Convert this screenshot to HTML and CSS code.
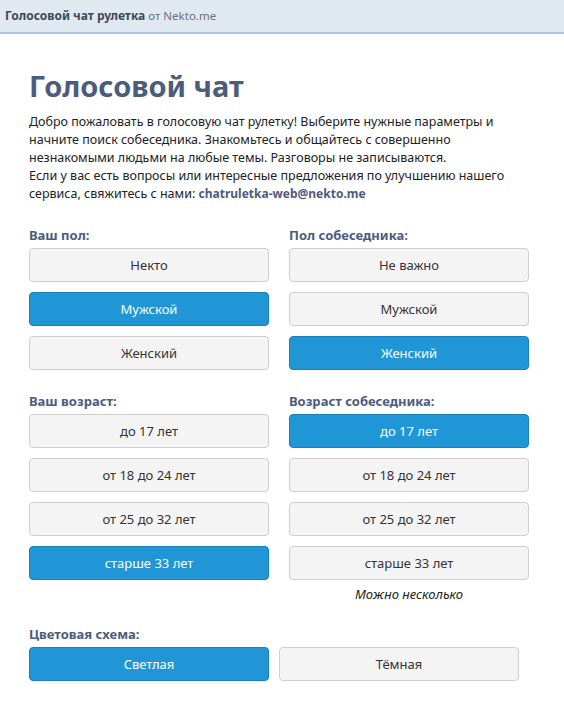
FILE: index.html
```html
<!DOCTYPE html>
<html>

<head>
    <meta name="viewport" content="width=device-width, initial-scale=1">
    <link rel="stylesheet" href="styles.css">
</head>

<body>

    <div class="topbar">
        <b>Голосовой чат рулетка</b> <span class="topbar-site">от Nekto.me</span>
    </div>

    <div class="container">
        <h1>Голосовой чат</h1>
        <p class="intro">
            Добро пожаловать в голосовую чат рулетку! Выберите нужные параметры и
            начните поиск собеседника. Знакомьтесь и общайтесь с совершенно
            незнакомыми людьми на любые темы. Разговоры не записываются.<br>
            Если у вас есть вопросы или интересные предложения по улучшению нашего
            сервиса, свяжитесь с нами: <b class="mail">chatruletka-web@nekto.me</b>
        </p>

        <!-- Gender -->
        <div class="row">
            <div class="col">
                <div class="label">Ваш пол:</div>
                <button class="btn">Некто</button>
                <button class="btn active">Мужской</button>
                <button class="btn">Женский</button>
            </div>
            <div class="col">
                <div class="label">Пол собеседника:</div>
                <button class="btn">Не важно</button>
                <button class="btn">Мужской</button>
                <button class="btn active">Женский</button>
            </div>
        </div>

        <!-- Age -->
        <div class="row">
            <div class="col">
                <div class="label">Ваш возраст:</div>
                <button class="btn">до 17 лет</button>
                <button class="btn">от 18 до 24 лет</button>
                <button class="btn">от 25 до 32 лет</button>
                <button class="btn active">старше 33 лет</button>
            </div>
            <div class="col">
                <div class="label">Возраст собеседника:</div>
                <button class="btn active">до 17 лет</button>
                <button class="btn">от 18 до 24 лет</button>
                <button class="btn">от 25 до 32 лет</button>
                <button class="btn">старше 33 лет</button>
                <div class="note">Можно несколько</div>
            </div>
        </div>

        <!-- Theme -->
        <div class="theme">
            <div class="label">Цветовая схема:</div>
            <div class="theme-buttons">
                <button class="btn active">Светлая</button>
                <button class="btn">Тёмная</button>
            </div>
        </div>
    </div>

</body>

</html>
```

FILE: styles.css
```css
body {
    font-family: "Noto Sans", "Open Sans", sans-serif;
    font-size: 13px;
    color: #222;
    background-color: #ffffff;
    margin: 0;
    padding: 0;
}

/* Top bar */
.topbar {
    height: 32px;
    line-height: 32px;
    padding: 0 5px;
    background-color: #e1e9f0;
    border-bottom: 2px solid #a9c4e6;
    color: #3d4859;
    font-size: 12px;
}

.topbar-site {
    color: #6b6f76;
    font-size: 11.5px;
}

/* Main block */
.container {
    width: 500px;
    padding: 35px 29px 0;
}

h1 {
    font-size: 29px;
    line-height: 34px;
    color: #4d5b7c;
    margin: 0 0 10px;
}

.intro {
    margin: 0;
    padding-bottom: 1px;
    font-size: 12.5px;
    line-height: 18px;
}

.mail {
    color: #4d5b7c;
    font-size: 12px;
}

.label {
    font-weight: bold;
    font-size: 13px;
    line-height: 18px;
    color: #4d5b7c;
    margin-bottom: 4px;
}

.row {
    display: flex;
    gap: 20px;
    margin-top: 22px;
}

.col {
    width: 240px;
    display: flex;
    flex-direction: column;
    gap: 10px;
}

.col .label {
    margin-bottom: -6px;
}

/* Buttons */
.btn {
    display: block;
    width: 240px;
    height: 34px;
    padding: 0;
    font-family: inherit;
    font-size: 13px;
    color: #333;
    background-color: #f4f4f4;
    border: 1px solid #cfcfcf;
    border-radius: 4px;
    cursor: pointer;
}

.btn.active {
    background-color: #2196d6;
    border-color: #1b80b9;
    color: #ffffff;
}

.note {
    text-align: center;
    font-style: italic;
    line-height: 18px;
    margin-top: -5px;
}

.theme {
    margin-top: 22px;
}

.theme-buttons {
    display: flex;
    gap: 10px;
}
```
